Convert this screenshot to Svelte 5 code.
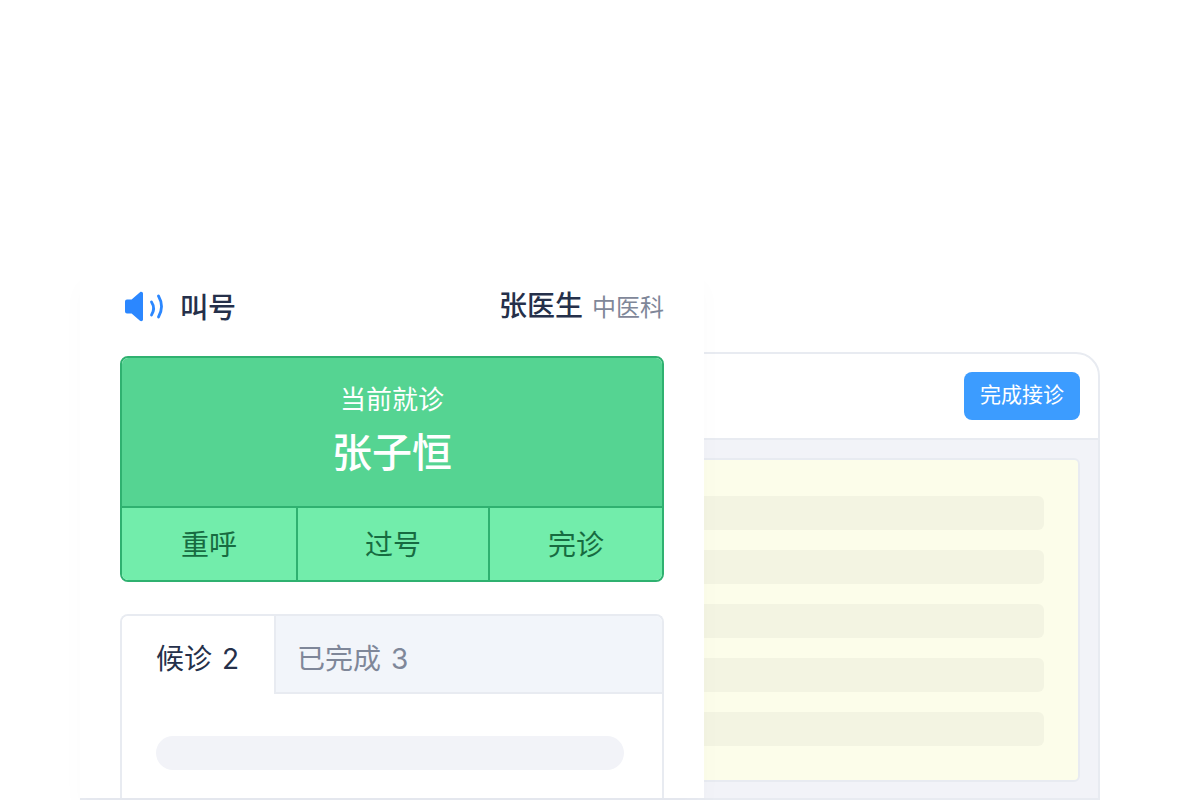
<script>
  const actions = [
    { label: '重呼', width: 176 },
    { label: '过号', width: 192 },
    { label: '完诊', width: 172 }
  ];
  const bars = [1, 2, 3, 4, 5];
</script>

<div class="stage" lang="zh-CN">
  <section class="window">
    <header class="win-head">
      <button class="finish">完成接诊</button>
    </header>
    <div class="win-body">
      <div class="note">
        {#each bars as b (b)}
          <div class="bar"></div>
        {/each}
      </div>
    </div>
  </section>

  <aside class="panel">
    <div class="top">
      <div class="title">
        <svg class="horn" width="44" height="32" viewBox="0 0 44 32" aria-hidden="true">
          <path d="M7 9.500h4.600L20 2.200c1.200-1 3-.2 3 1.300v26c0 1.500-1.800 2.300-3 1.300L11.600 23.500H7A2 2 0 0 1 5 21.500V11.500A2 2 0 0 1 7 9.500z" fill="#2b87ff"/>
          <path d="M31.500 12c2.600 4 2.600 9 0 13" fill="none" stroke="#2b87ff" stroke-width="2.800" stroke-linecap="round"/>
          <path d="M38.500 6c3.800 6.600 3.800 14.400 0 21" fill="none" stroke="#2b87ff" stroke-width="2.800" stroke-linecap="round"/>
        </svg>
        <span>叫号</span>
      </div>
      <div class="doctor"><b>张医生</b><span>中医科</span></div>
    </div>

    <div class="current">
      <div class="now">
        <div class="caption">当前就诊</div>
        <div class="name">张子恒</div>
      </div>
      <div class="actions">
        {#each actions as a (a.label)}
          <div class="action" style="width:{a.width}px">{a.label}</div>
        {/each}
      </div>
    </div>

    <div class="queue">
      <div class="tabs">
        <div class="tab active">候诊 2</div>
        <div class="tab">已完成 3</div>
      </div>
      <div class="list">
        <div class="pill"></div>
      </div>
    </div>
  </aside>
</div>

<style>
  :global(body) {
    margin: 0;
    background: #fff;
    font-family: "Inter", "Noto Sans CJK SC", sans-serif;
  }
  .stage {
    position: relative;
    width: 1180px;
    height: 800px;
    overflow: hidden;
    box-sizing: border-box;
    padding: 352px 80px 0;
  }
  .window {
    box-sizing: border-box;
    width: 1020px;
    height: 448px;
    border: 2px solid #e8ebf1;
    border-radius: 0 24px 0 0;
    display: flex;
    flex-direction: column;
    background: #fff;
  }
  .win-head {
    box-sizing: border-box;
    height: 86px;
    flex: none;
    border-bottom: 2px solid #e8ebf1;
    display: flex;
    justify-content: flex-end;
    padding: 18px 18px 0 0;
  }
  .finish {
    width: 116px;
    height: 48px;
    border: 0;
    border-radius: 8px;
    background: #3c9cff;
    color: #fff;
    font: 400 21px/46px "Inter", "Noto Sans CJK SC", sans-serif;
    padding: 0 0 2px;
  }
  .win-body {
    flex: 1;
    background: #f2f3f8;
    padding: 18px 18px 16px 0;
    display: flex;
    justify-content: flex-end;
  }
  .note {
    box-sizing: border-box;
    width: 700px;
    border: 2px solid #e8ebf1;
    border-radius: 6px;
    background: #fcfdea;
    padding: 36px 34px 0 0;
    display: flex;
    flex-direction: column;
    align-items: flex-end;
    gap: 20px;
  }
  .bar {
    width: 660px;
    height: 34px;
    border-radius: 6px;
    background: #f3f4e2;
    flex: none;
  }
  .panel {
    position: absolute;
    left: 80px;
    top: 270px;
    width: 624px;
    height: 528px;
    box-sizing: border-box;
    padding: 0 40px;
    background: #fff;
    box-shadow: 0 14px 24px rgba(40, 50, 80, 0.02);
    overflow: hidden;
  }
  .top {
    height: 86px;
    box-sizing: border-box;
    padding-top: 16px;
    display: flex;
    justify-content: space-between;
    align-items: flex-start;
  }
  .title {
    display: flex;
    align-items: center;
    height: 40px;
    font-size: 28px;
    font-weight: 500;
    color: #25304a;
  }
  .horn {
    margin-right: 16px;
    width: 44px;
    height: 32px;
  }
  .doctor {
    display: flex;
    align-items: baseline;
    height: 40px;
    line-height: 40px;
    color: #25304a;
  }
  .doctor b {
    font-size: 28px;
    font-weight: 500;
  }
  .doctor span {
    margin-left: 9px;
    font-size: 24px;
    color: #7f8799;
  }
  .current {
    box-sizing: border-box;
    height: 226px;
    border: 2px solid #2fb170;
    border-radius: 8px;
    overflow: hidden;
    display: flex;
    flex-direction: column;
  }
  .now {
    height: 150px;
    flex: none;
    box-sizing: border-box;
    background: #55d492;
    color: #fff;
    border-bottom: 2px solid #2fb170;
    text-align: center;
    padding-top: 24px;
  }
  .caption {
    font-size: 26px;
    line-height: 36px;
  }
  .name {
    font-size: 40px;
    font-weight: 500;
    line-height: 56px;
    margin-top: 7px;
  }
  .actions {
    flex: 1;
    display: flex;
    background: #72edab;
  }
  .action {
    box-sizing: border-box;
    border-right: 2px solid #2fb170;
    text-align: center;
    font-size: 28px;
    line-height: 74px;
    color: #176b41;
  }
  .action:last-child {
    border-right: 0;
  }
  .queue {
    box-sizing: border-box;
    margin-top: 32px;
    height: 200px;
    border: 2px solid #e8ebf1;
    border-bottom: 0;
    border-radius: 8px 8px 0 0;
    overflow: hidden;
  }
  .tabs {
    display: flex;
    height: 78px;
  }
  .tab {
    flex: 1;
    box-sizing: border-box;
    background: #f2f5fa;
    border-bottom: 2px solid #e8ebf1;
    padding-left: 21px;
    font-size: 28px;
    line-height: 86px;
    color: #7f8799;
    word-spacing: 2px;
  }
  .tab.active {
    flex: none;
    width: 154px;
    background: #fff;
    border-bottom: 0;
    border-right: 2px solid #e8ebf1;
    padding-left: 34px;
    color: #25304a;
  }
  .list {
    padding: 42px 38px 0 34px;
  }
  .pill {
    height: 34px;
    border-radius: 17px;
    background: #f2f3f8;
  }
</style>
